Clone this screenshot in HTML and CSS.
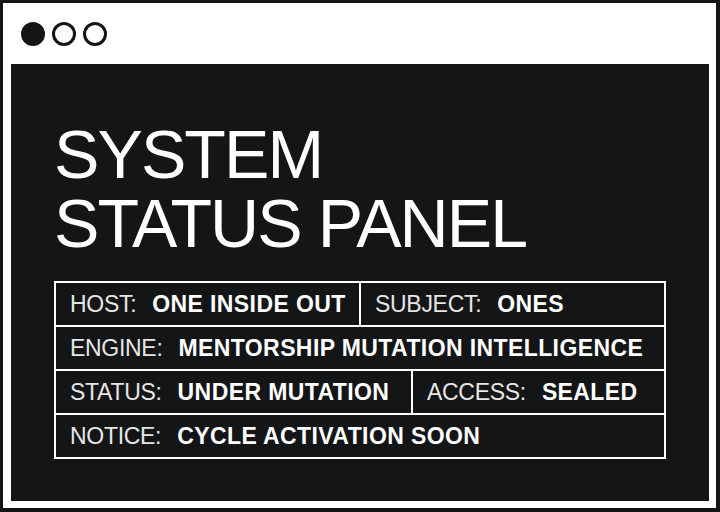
FILE: index.html
```html
<!DOCTYPE html>
<html lang="en">
<head>
<meta charset="utf-8">
<title>System Status Panel</title>
<link rel="stylesheet" href="styles.css">
</head>
<body>
<div class="window">
  <div class="titlebar">
    <span class="dot dot-filled"></span>
    <span class="dot"></span>
    <span class="dot"></span>
  </div>
  <div class="panel">
    <h1 class="title">SYSTEM<br>STATUS PANEL</h1>
    <div class="table">
      <div class="row row-half">
        <div class="cell"><span class="label">HOST:</span><span class="value">ONE INSIDE OUT</span></div>
        <div class="cell cell-split"><span class="label">SUBJECT:</span><span class="value">ONES</span></div>
      </div>
      <div class="row">
        <div class="cell"><span class="label">ENGINE:</span><span class="value">MENTORSHIP MUTATION INTELLIGENCE</span></div>
      </div>
      <div class="row row-wide">
        <div class="cell"><span class="label">STATUS:</span><span class="value">UNDER MUTATION</span></div>
        <div class="cell cell-split"><span class="label">ACCESS:</span><span class="value">SEALED</span></div>
      </div>
      <div class="row">
        <div class="cell"><span class="label">NOTICE:</span><span class="value">CYCLE ACTIVATION SOON</span></div>
      </div>
    </div>
  </div>
</div>
</body>
</html>
```

FILE: styles.css
```css
html, body {
  margin: 0;
  padding: 0;
  background: #141517;
}

body {
  font-family: "Liberation Sans", Arial, sans-serif;
}

.window {
  box-sizing: border-box;
  width: 720px;
  height: 512px;
  background: #ffffff;
  border-style: solid;
  border-color: #141517;
  border-width: 3px 4px 4px 3px;
  padding: 0 7px 7px 8px;
  display: flex;
  flex-direction: column;
}

.titlebar {
  height: 61px;
  flex: none;
  display: flex;
  align-items: center;
  gap: 7px;
  padding-left: 10px;
}

.dot {
  box-sizing: border-box;
  width: 24px;
  height: 24px;
  border-radius: 50%;
  border: 3px solid #141517;
  background: #ffffff;
}

.dot-filled {
  background: #141517;
}

.panel {
  flex: 1;
  background: #141517;
  padding: 56px 43px 0 43px;
  color: #ffffff;
}

.title {
  margin: 0;
  font-size: 68px;
  line-height: 69px;
  font-weight: 400;
  letter-spacing: -1.9px;
  color: #ffffff;
}

.table {
  margin-top: 23px;
  width: 612px;
  box-sizing: border-box;
  border: 2px solid #ffffff;
}

.row {
  display: flex;
  height: 42px;
  border-top: 2px solid #ffffff;
}

.row:first-child {
  border-top: none;
  height: 42px;
}

.cell {
  flex: 1;
  display: flex;
  align-items: center;
  padding-left: 14px;
  white-space: nowrap;
  font-size: 23px;
}

.row-half .cell {
  flex: 1 1 0;
}

.row-wide .cell:first-child {
  flex: none;
  width: 341px;
}

.cell-split {
  border-left: 2px solid #ffffff;
}

.label {
  font-weight: 400;
  color: #e6e6e6;
  letter-spacing: -0.3px;
  margin-right: 16px;
}

.value {
  font-weight: 700;
  letter-spacing: 0.4px;
}
```
